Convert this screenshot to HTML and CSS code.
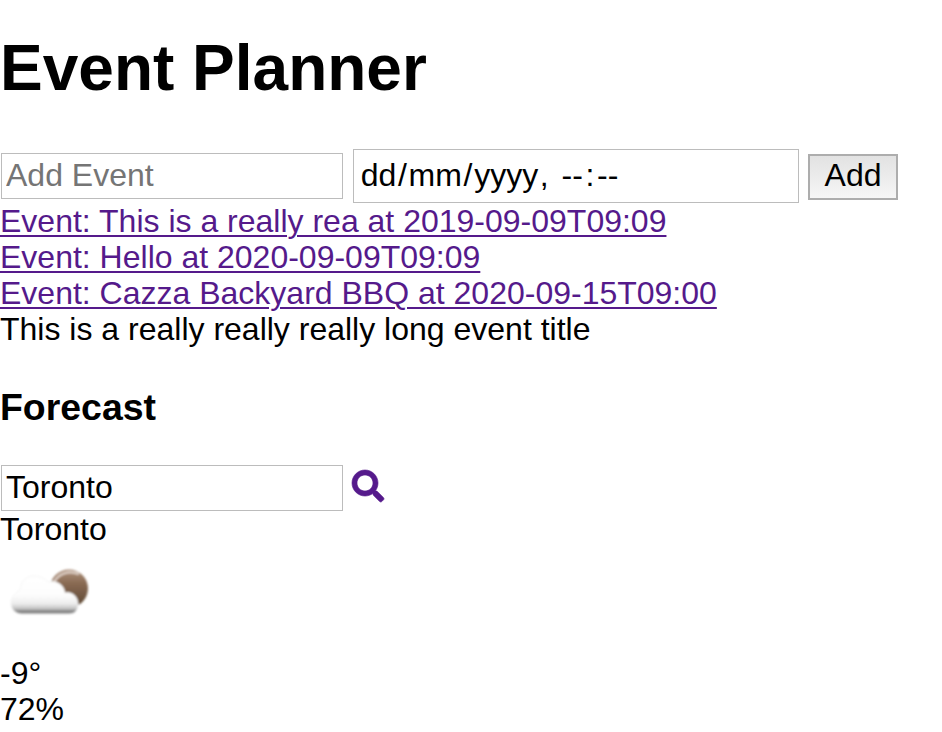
FILE: index.html
```html
<!DOCTYPE html>
<html lang="en">
<head>
<meta charset="utf-8">
<title>Event Planner</title>
<link rel="stylesheet" href="styles.css">
</head>
<body>
<h1>Event Planner</h1>
<form class="row event-form">
  <input class="field" type="text" placeholder="Add Event">
  <div class="date-field"><span class="part">dd</span>/<span class="part">mm</span>/<span class="part">yyyy</span><span class="comma">,</span><span class="part">--</span><span class="colon">:</span><span class="part">--</span></div>
  <button class="add" type="button">Add</button>
</form>
<div class="events">
  <div><a href="#">Event: This is a really rea at 2019-09-09T09:09</a></div>
  <div><a href="#">Event: Hello at 2020-09-09T09:09</a></div>
  <div><a href="#">Event: Cazza Backyard BBQ at 2020-09-15T09:00</a></div>
  <div>This is a really really really long event title</div>
</div>
<h3>Forecast</h3>
<div class="row city-form">
  <input class="field" type="text" value="Toronto">
  <svg class="search" viewBox="0 0 512 512"><path fill="#551a8b" stroke="#551a8b" stroke-width="10" d="M505 442.700L405.300 343c-4.500-4.500-10.600-7-17-7H372c27.600-35.300 44-79.700 44-128C416 93.100 322.900 0 208 0S0 93.100 0 208s93.100 208 208 208c48.300 0 92.700-16.400 128-44v16.300c0 6.400 2.500 12.500 7 17l99.700 99.700c9.400 9.400 24.600 9.400 33.900 0l28.300-28.300c9.400-9.400 9.400-24.600.1-34zM208 336c-70.700 0-128-57.200-128-128 0-70.700 57.200-128 128-128 70.700 0 128 57.200 128 128 0 70.700-57.200 128-128 128z"/></svg>
</div>
<div>Toronto</div>
<svg class="weather" viewBox="0 0 100 100">
  <defs>
    <linearGradient id="moon" x1="0" y1="0" x2="0" y2="1">
      <stop offset="0" stop-color="#b0937e"/><stop offset=".35" stop-color="#8a6b54"/><stop offset="1" stop-color="#5b4632"/>
    </linearGradient>
    <linearGradient id="cloud" gradientUnits="userSpaceOnUse" x1="0" y1="29" x2="0" y2="67">
      <stop offset="0" stop-color="#fff"/><stop offset=".5" stop-color="#fdfdfd"/><stop offset=".72" stop-color="#eee"/><stop offset=".85" stop-color="#c8c8c8"/><stop offset=".95" stop-color="#777"/><stop offset="1" stop-color="#999"/>
    </linearGradient>
    <filter id="soft" x="-10%" y="-10%" width="120%" height="120%"><feGaussianBlur stdDeviation=".8"/></filter>
  </defs>
  <g filter="url(#soft)">
    <circle cx="69" cy="41.500" r="19" fill="url(#moon)"/>
    <path d="M53 37C58 26 69 23 79 27" fill="none" stroke="#dacbc1" stroke-width="2.500"/>
    <path d="M21 67C14 66 11 61 11 56C11 50 15 46 20 43C21 34 26 29 34 29C41 29 45 32 48 35C57 33 64 38 65 46C72 44 78 50 78 57C78 63 75 67 69 67Z" fill="url(#cloud)" stroke="#f3f3f3" stroke-width=".8"/>
  </g>
</svg>
<div>-9°</div>
<div>72%</div>
</body>
</html>
```
FILE: styles.css
```css
* { box-sizing: border-box; }
body {
  margin: 0;
  background: #fff;
  color: #000;
  font: 32px/36px "Liberation Sans", Helvetica, Arial, sans-serif;
  overflow: hidden;
}
h1 {
  margin: 0;
  padding-top: 31px;
  height: 149px;
  font-size: 64px;
  line-height: 74px;
}
.row { display: flex; margin: 0; }
.event-form { height: 54px; align-items: center; }
.field {
  width: 342px;
  height: 46px;
  margin: 0 0 0 1px;
  padding: 0 4px 2px;
  border: 1px solid #bcbcbc;
  border-radius: 0;
  background: #fff;
  color: #000;
  font: inherit;
  outline: 0;
}
.field::placeholder { color: #757575; opacity: 1; }
.date-field {
  display: flex;
  width: 446px;
  height: 54px;
  margin-left: 10px;
  padding: 7px 5px;
  border: 1px solid #bcbcbc;
}
.part { padding: 0 1.7px; }
.comma { width: 20px; }
.colon { padding: 0 1px; }
.add {
  width: 90px;
  height: 46px;
  margin: 2px 0 0 9px;
  padding: 0 0 5px;
  border: 2px solid #adadad;
  border-radius: 0;
  background: linear-gradient(#e2e2e2, #f6f6f6);
  color: #000;
  font: inherit;
}
a { color: #551a8b; text-decoration-thickness: 2px; text-underline-offset: 3px; }
h3 {
  margin: 0;
  padding-top: 39px;
  height: 118px;
  font-size: 37.44px;
  line-height: 42px;
}
.city-form { height: 46px; }
.search { width: 32px; height: 32px; margin: 5px 0 0 9px; overflow: visible; }
.weather { display: block; width: 100px; height: 100px; margin: 0 0 8px; }
```
